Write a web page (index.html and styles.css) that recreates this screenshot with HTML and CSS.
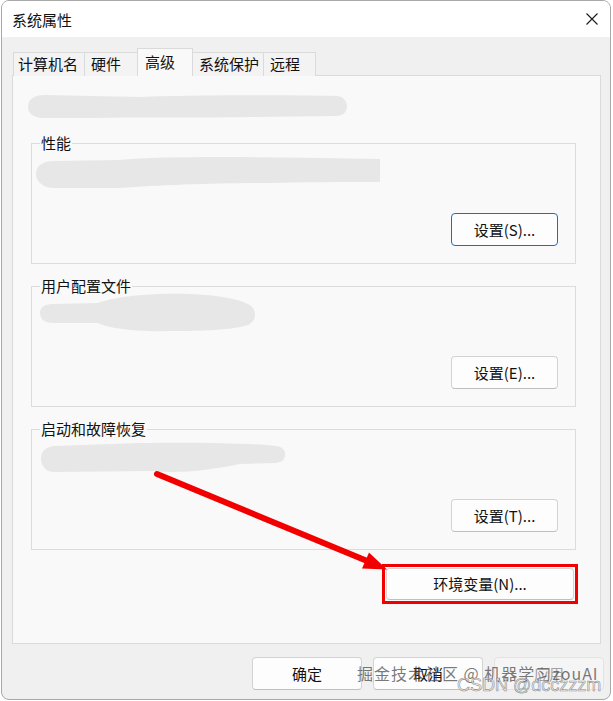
FILE: index.html
```html
<!DOCTYPE html>
<html lang="zh-CN">
<head>
<meta charset="utf-8">
<title>系统属性</title>
<link rel="stylesheet" href="styles.css">
</head>
<body>
<div class="window">
  <div class="titlebar">
    <span class="title">系统属性</span>
    <svg class="close" viewBox="0 0 12 12"><path d="M0.5 0.5 L11.5 11.5 M11.5 0.5 L0.5 11.5" stroke="#1a1a1a" stroke-width="1.1" fill="none"/></svg>
  </div>
  <div class="client">
    <div class="tabs">
      <div class="tab tab-first">计算机名</div>
      <div class="tab tab-hw">硬件</div>
      <div class="tab tab-active">高级</div>
      <div class="tab tab-sys">系统保护</div>
      <div class="tab tab-remote">远程</div>
    </div>
    <div class="panel">
      <svg class="note" width="320" height="23" viewBox="0 0 320 23"><path class="blob" d="M-3 12 C-3 3 5 0 14 0 L110 2 C160 0 260 0 305 1 C312 1 316 6 316 11 C316 17 312 21 305 21 L220 22 C150 23 110 22 60 23 L12 23 C4 23 -3 19 -3 12 Z"/></svg>

      <fieldset class="group">
        <legend>性能</legend>
        <div class="group-info">
          <svg width="340" height="40" viewBox="0 0 340 40"><path class="blob" d="M-4 22 C-4 13 4 9 14 9 L80 8 C120 4 220 5 280 6 L340 7 L340 30 C300 30 260 30 230 31 C180 31 120 33 80 36 L14 36 C4 36 -4 30 -4 22 Z"/></svg>
        </div>
        <div class="group-actions"><button class="btn btn-default">设置(S)...</button></div>
      </fieldset>

      <fieldset class="group">
        <legend>用户配置文件</legend>
        <div class="group-info">
          <svg width="220" height="40" viewBox="0 0 220 40"><path class="blob" d="M0 18 C0 11 6 9 14 9 L58 8 C80 0 120 -2 150 -1 C175 0 205 4 212 12 C217 18 216 26 208 30 C190 36 150 36 130 36 C100 37 70 34 58 28 L14 28 C6 28 0 25 0 18 Z"/></svg>
        </div>
        <div class="group-actions"><button class="btn">设置(E)...</button></div>
      </fieldset>

      <fieldset class="group">
        <legend>启动和故障恢复</legend>
        <div class="group-info">
          <svg width="250" height="40" viewBox="0 0 250 40"><path class="blob" d="M1 20 C1 12 7 9 14 8 L100 5 C150 4 210 5 236 8 C244 9 246 14 245 18 C244 23 240 25 234 25 L200 26 C170 32 140 36 110 33 L14 34 C6 34 1 28 1 20 Z"/></svg>
        </div>
        <div class="group-actions"><button class="btn">设置(T)...</button></div>
      </fieldset>

      <div class="env-row">
        <span class="highlight"><button class="btn btn-env">环境变量(N)...</button></span>
      </div>
    </div>
    <div class="actions">
      <button class="btn btn-wide">确定</button>
      <button class="btn btn-wide">取消</button>
      <button class="btn btn-wide" disabled>应用</button>
    </div>
  </div>
</div>

<svg class="arrow" width="613" height="701" viewBox="0 0 613 701">
  <line x1="157" y1="474" x2="366" y2="560.5" stroke="#f20000" stroke-width="6" stroke-linecap="round"/>
  <polygon points="387,569.5 362,568.5 369,552.5" fill="#f20000"/>
</svg>

<div class="watermark">
  <div class="wm-line">掘金技术社区 @ 机器学习zouAI</div>
  <div class="wm-csdn">CSDN @dcczzzm</div>
</div>
</body>
</html>
```

FILE: styles.css
```css
* {
  box-sizing: border-box;
}

html,
body {
  margin: 0;
}

body {
  position: relative;
  width: 613px;
  height: 701px;
  overflow: hidden;
  background: #ffffff;
  font-family: "Noto Sans CJK SC", "Noto Sans", sans-serif;
  font-size: 15px;
  color: #111111;
}

.window {
  margin-left: 1px;
  width: 610px;
  height: 700px;
  border: 1px solid #a8a8a8;
  border-radius: 8px;
  background: #f0f0f0;
  overflow: hidden;
}

.titlebar {
  height: 36px;
  background: #ffffff;
  display: flex;
  align-items: center;
  justify-content: space-between;
  padding: 0 12px 0 10px;
}

.title {
  font-size: 15px;
  line-height: 20px;
  padding-top: 1px;
}

.close {
  width: 12px;
  height: 12px;
  display: block;
}

.client {
  padding: 11px 0 9px 10px;
}

.tabs {
  display: flex;
  align-items: flex-end;
  height: 28px;
  margin-left: 1px;
  margin-bottom: -1px;
}

.tab {
  height: 24px;
  padding: 1px 0 0 6px;
  line-height: 20px;
  font-size: 15px;
  background: #f3f3f3;
  border-top: 1px solid #dadada;
  border-right: 1px solid #dadada;
  white-space: nowrap;
}

.tab-first {
  width: 72px;
  padding-left: 4px;
  border-left: 1px solid #dadada;
}

.tab-hw {
  width: 52px;
  border-right: none;
}

.tab-active {
  position: relative;
  z-index: 1;
  width: 56px;
  height: 28px;
  padding: 3px 0 0 7px;
  background: #f9f9f9;
  border: 1px solid #dadada;
  border-bottom: none;
}

.tab-sys {
  width: 71px;
}

.tab-remote {
  width: 52px;
}

.panel {
  margin-right: 9px;
  background: #f9f9f9;
  border: 1px solid #dadada;
  padding: 19px 24px 39px 18px;
}

.note {
  display: block;
  height: 23px;
  margin-bottom: 16px;
  overflow: visible;
}

.blob {
  fill: #e7e7e7;
}

.group {
  margin: 0;
  padding: 0 17px 17px 8px;
  border: 1px solid #dcdcdc;
  min-width: 0;
}

.group + .group {
  margin-top: 13px;
}

.group legend {
  padding: 0 1px;
  font-size: 15px;
  line-height: 18px;
}

.group-info {
  height: 61px;
}

.group-info svg {
  display: block;
  overflow: visible;
}

.group-actions {
  display: flex;
  justify-content: flex-end;
}

.btn {
  width: 107px;
  height: 33px;
  padding: 0;
  font-family: inherit;
  font-size: 15px;
  line-height: 20px;
  color: #111111;
  background: #fdfdfd;
  border: 1px solid #d3d3d3;
  border-bottom-color: #bfbfbf;
  border-radius: 4px;
}

.btn-default {
  border-color: #1a6fc0;
}

.env-row {
  display: flex;
  justify-content: flex-end;
  margin-top: 14px;
  margin-right: -2px;
}

.highlight {
  display: flex;
  padding: 1px;
  border: 3px solid #f20000;
}

.btn-env {
  width: 188px;
  height: 32px;
}

.actions {
  display: flex;
  justify-content: flex-end;
  gap: 11px;
  margin: 13px 6px 0 0;
}

.btn-wide {
  width: 110px;
  height: 33px;
}

.btn:disabled {
  background: #f5f5f5;
  border-color: #e3e3e3;
  color: #a3a3a3;
}

.arrow {
  position: absolute;
  left: 0;
  top: 0;
  pointer-events: none;
}

.watermark {
  position: absolute;
  left: 357px;
  top: 662px;
  pointer-events: none;
  white-space: nowrap;
}

.wm-line {
  font-size: 16px;
  line-height: 22px;
  letter-spacing: 1px;
  color: rgba(70, 70, 70, 0.72);
}

.wm-csdn {
  margin-top: -9px;
  margin-left: 100px;
  font-family: "Liberation Sans", Arial, sans-serif;
  font-size: 18px;
  line-height: 20px;
  color: rgba(235, 235, 235, 0.75);
  -webkit-text-stroke: 0.6px rgba(90, 90, 90, 0.65);
}
```
